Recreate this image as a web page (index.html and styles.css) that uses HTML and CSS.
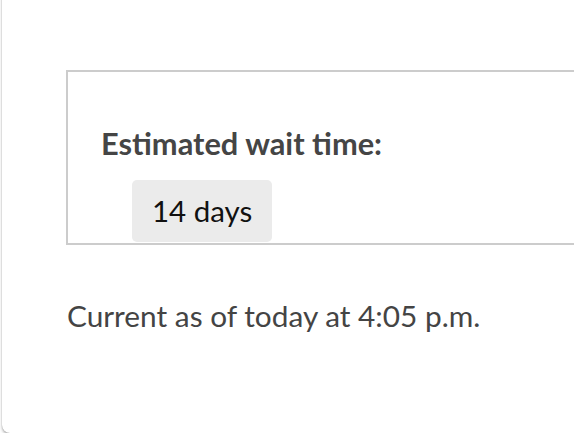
FILE: index.html
```html
<!DOCTYPE html>
<html>
<head>
<meta charset="utf-8">
<link rel="stylesheet" href="styles.css">
</head>
<body>
<div class="card">
  <div class="wait-box">
    <div class="wait-label">Estimated wait time:</div>
    <div class="wait-value">14 days</div>
  </div>
  <p class="updated">Current as of today at 4:05 p.m.</p>
</div>
</body>
</html>
```
FILE: styles.css
```css
html, body {
  margin: 0;
  padding: 0;
  background: #ffffff;
  overflow: hidden;
}
body {
  font-family: Lato, "Open Sans", sans-serif;
  color: #444444;
}
.card {
  margin: -20px -40px 0 2px;
  height: 453px;
  box-sizing: border-box;
  background: #ffffff;
  border-radius: 8px;
  box-shadow: 0 2px 3px rgba(0,0,0,0.3), 0 0 1px rgba(0,0,0,0.25);
  padding: 90px 0 0 64px;
}
.wait-box {
  border: 2px solid #cccccc;
  border-right: none;
  height: 175px;
  box-sizing: border-box;
  padding: 54px 0 0 33px;
  display: flex;
  flex-direction: column;
  align-items: flex-start;
}
.wait-label {
  font-weight: 700;
  font-size: 30.8px;
  line-height: 36px;
  color: #454545;
}
.wait-value {
  margin: 18px 0 0 31px;
  background: #ebebeb;
  border-radius: 5px;
  padding: 0 20px;
  height: 62px;
  line-height: 62px;
  font-size: 29.5px;
  color: #111111;
}
.updated {
  margin: 53px 0 0 1px;
  font-size: 29.8px;
  line-height: 36px;
  color: #444444;
}
```
